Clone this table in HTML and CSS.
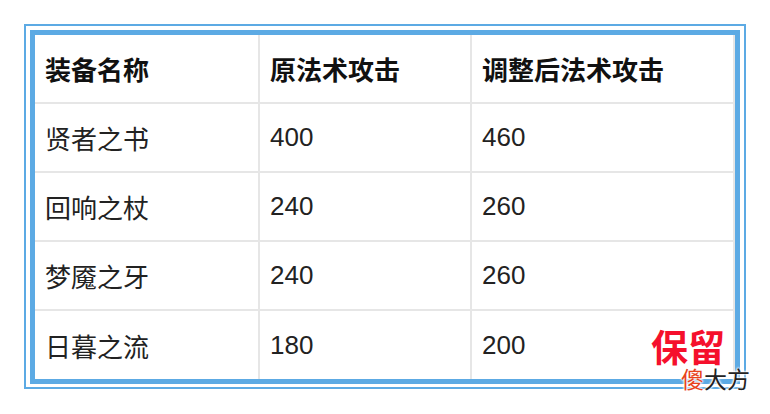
FILE: index.html
```html
<!DOCTYPE html>
<html lang="zh">
<head>
<meta charset="utf-8">
<link rel="stylesheet" href="styles.css">
</head>
<body>
<div class="frame">
  <div class="inner">
    <div class="table">
      <div class="row head"><div class="cell">装备名称</div><div class="cell">原法术攻击</div><div class="cell">调整后法术攻击</div></div>
      <div class="row"><div class="cell">贤者之书</div><div class="cell">400</div><div class="cell">460</div></div>
      <div class="row"><div class="cell">回响之杖</div><div class="cell">240</div><div class="cell">260</div></div>
      <div class="row"><div class="cell">梦魇之牙</div><div class="cell">240</div><div class="cell">260</div></div>
      <div class="row last"><div class="cell">日暮之流</div><div class="cell">180</div><div class="cell">200</div></div>
    </div>
  </div>
</div>
<div class="mark">
  <div class="mark-top">保留</div>
  <div class="mark-bottom"><span class="sha">傻</span>大方</div>
</div>
</body>
</html>
```

FILE: styles.css
```css
html, body {
  margin: 0;
  padding: 0;
  background: #ffffff;
  font-family: "Liberation Sans", "Noto Sans CJK SC", sans-serif;
}
.frame {
  margin: 24px 0 0 24px;
  width: 722px;
  box-sizing: border-box;
  border: 2px solid #5caae4;
  padding: 4px 4px 3px 4px;
}
.inner {
  border: 5px solid #5caae4;
  background: #ffffff;
}
.table {
  width: 700px;
}
.row {
  display: grid;
  grid-template-columns: 225px 212px 263px;
  height: 69px;
  border-bottom: 2px solid #e6e6e6;
  box-sizing: border-box;
}
.row.last {
  height: 68px;
  border-bottom: none;
}
.cell {
  display: flex;
  align-items: center;
  padding-left: 10px;
  border-right: 2px solid #e6e6e6;
  font-size: 26px;
  color: #222222;
}
.head .cell {
  font-weight: bold;
  color: #111111;
}
.mark {
  position: absolute;
  left: 651px;
  top: 326px;
  width: 104px;
}
.mark-top {
  font-family: "Noto Sans CJK SC", sans-serif;
  font-size: 37px;
  line-height: 40px;
  color: #f5102c;
  font-weight: bold;
}
.mark-bottom {
  font-family: "Noto Sans CJK SC", sans-serif;
  margin-left: 30px;
  font-size: 23px;
  line-height: 24px;
  color: #222222;
  text-shadow: 0 0 2px #fff, 0 0 2px #fff, 0 0 3px #fff, 0 0 3px #fff;
}
.sha {
  color: #e8421c;
}
```
